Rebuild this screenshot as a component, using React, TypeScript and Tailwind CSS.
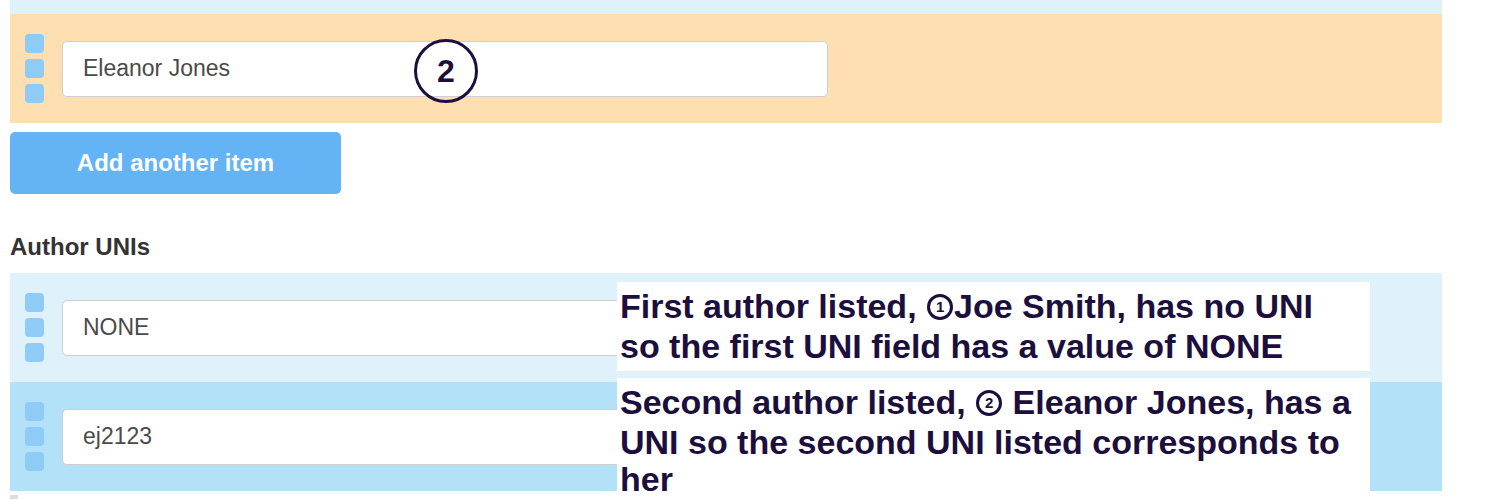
import React from "react"

const font = { fontFamily: '"Liberation Sans", Arial, sans-serif' }

function Handle() {
  return (
    <div className="flex flex-col gap-[6px] w-[19px] shrink-0">
      <span className="h-[19px] rounded-[4px] bg-[#8ecbf6]" />
      <span className="h-[19px] rounded-[4px] bg-[#8ecbf6]" />
      <span className="h-[19px] rounded-[4px] bg-[#8ecbf6]" />
    </div>
  )
}

function Row({ value, bg, children }: { value: string; bg: string; children?: React.ReactNode }) {
  return (
    <div className={`relative flex items-center h-[109px] pl-[15px] ${bg}`}>
      <Handle />
      <div className="ml-[18px] w-[766px] h-[56px] bg-white border border-[#cfcfcf] rounded-[5px] flex items-center pl-[20px] text-[23px] text-[#4a4a4a]">
        {value}
      </div>
      {children}
    </div>
  )
}

function Num({ n }: { n: string }) {
  return (
    <span className="inline-flex items-center justify-center w-[26px] h-[26px] rounded-full border-[3px] border-[#1c0f3d] text-[15px] leading-none align-[6px] mx-[1px]">
      {n}
    </span>
  )
}

export default function App() {
  return (
    <div className="w-[1500px] h-[500px] bg-white overflow-hidden" style={font}>
      <div className="w-[1432px] ml-[10px]">
        {/* previous item tail */}
        <div className="h-[14px] bg-[#dff1fb]" />

        <Row value="Eleanor Jones" bg="bg-[#fddfb1]">
          <div className="absolute left-[404px] top-[25px] w-[64px] h-[64px] rounded-full border-[3px] border-[#1c0f3d] flex items-center justify-center text-[32px] font-bold text-[#1c0f3d]">
            2
          </div>
        </Row>

        <button className="mt-[9px] w-[331px] h-[62px] rounded-[5px] bg-[#63b3f5] text-white text-[24px] font-bold">
          Add another item
        </button>

        <h3 className="mt-[39px] text-[24px] font-bold text-[#333] leading-[28px]">Author UNIs</h3>

        <div className="mt-[12px] relative">
          <Row value="NONE" bg="bg-[#dff2fc]" />
          <Row value="ej2123" bg="bg-[#b3e2f8]" />

          {/* annotations */}
          <div className="absolute left-[607px] top-[9px] w-[753px] h-[89px] bg-white px-[3px] text-[#1c0f3d] font-bold text-[34px] leading-[40px] pt-[4px]">
            <div>First author listed, <Num n="1" />Joe Smith, has no UNI</div>
            <div>so the first UNI field has a value of NONE</div>
          </div>
          <div className="absolute left-[607px] top-[105px] w-[753px] h-[122px] bg-white px-[3px] text-[#1c0f3d] font-bold text-[34px] leading-[40px] pt-[4px]">
            <div>Second author listed, <Num n="2" /> Eleanor Jones, has a</div>
            <div>UNI so the second UNI listed corresponds to</div>
            <div className="leading-[34px]">her</div>
          </div>
        </div>
        <div className="mt-[4px] w-[8px] h-[4px] bg-[#ddd]" />
      </div>
    </div>
  )
}
